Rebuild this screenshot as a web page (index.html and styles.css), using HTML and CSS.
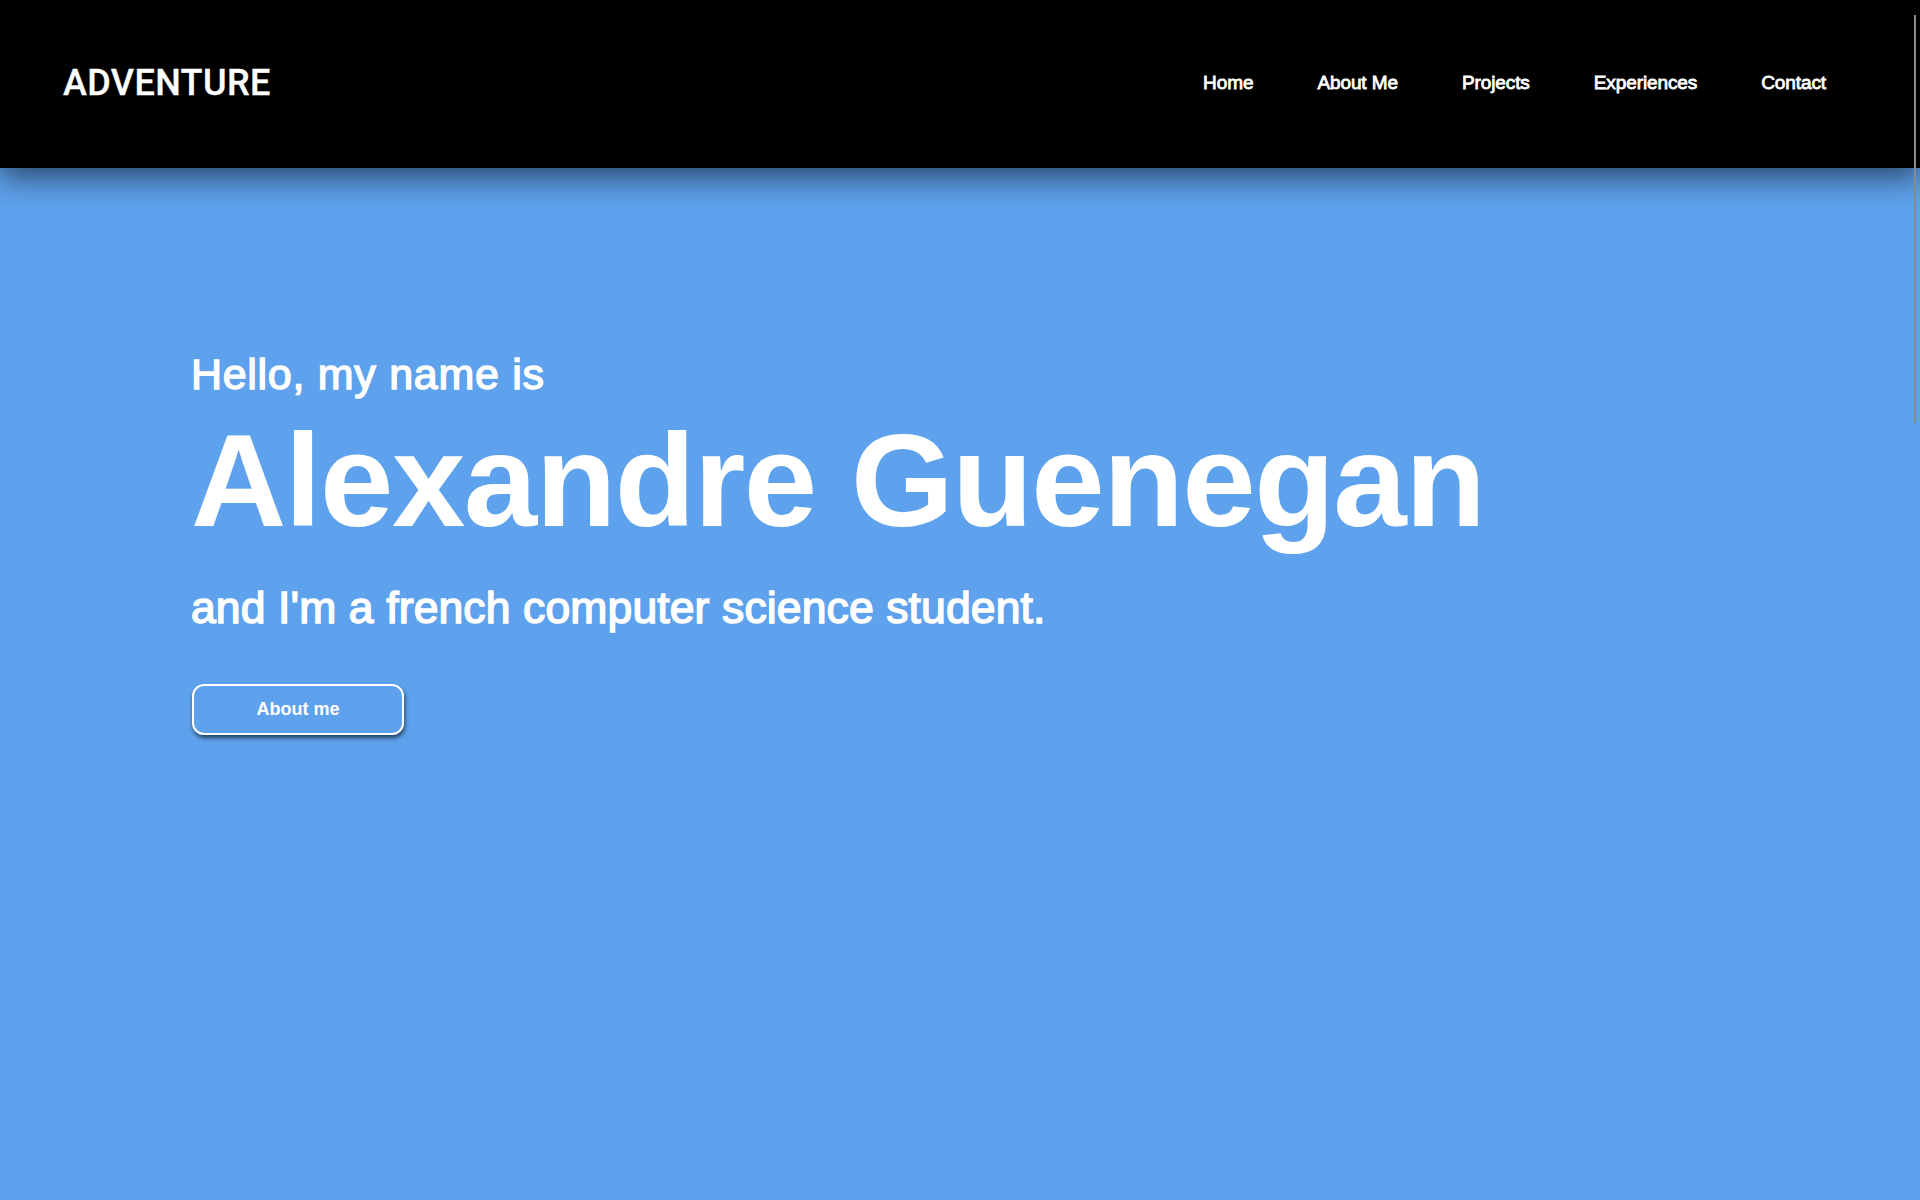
FILE: index.html
```html
<!DOCTYPE html>
<html lang="en">
<head>
<meta charset="utf-8">
<title>Adventure</title>
<link rel="stylesheet" href="styles.css">
</head>
<body>
  <header class="topbar">
    <a class="logo" href="#">ADVENTURE</a>
    <nav class="nav">
      <a href="#">Home</a>
      <a href="#">About Me</a>
      <a href="#">Projects</a>
      <a href="#">Experiences</a>
      <a href="#">Contact</a>
    </nav>
  </header>
  <main class="hero">
    <div class="hero-inner">
      <p class="hello">Hello, my name is</p>
      <h1 class="name">Alexandre Guenegan</h1>
      <p class="tagline">and I'm a french computer science student.</p>
      <a class="btn" href="#">About me</a>
    </div>
  </main>
  <div class="scroll-thumb"></div>
</body>
</html>
```

FILE: styles.css
```css
* { box-sizing: border-box; }
html, body {
  margin: 0;
  padding: 0;
  height: 100%;
  overflow: hidden;
}
body {
  background: #5ea2ed;
  font-family: "Liberation Sans", Arial, sans-serif;
  color: #fff;
  display: flex;
  flex-direction: column;
}
a { color: #fff; text-decoration: none; }

.topbar {
  position: relative;
  z-index: 2;
  height: 168px;
  flex: 0 0 168px;
  background: #000;
  display: flex;
  align-items: center;
  justify-content: space-between;
  padding: 0 94px 2px 63px;
  box-shadow: 0 10px 28px rgba(0, 0, 0, 0.55);
}
.logo {
  font-family: Roboto, "Liberation Sans", sans-serif;
  font-weight: 500;
  font-size: 36px;
  letter-spacing: 0.4px;
  -webkit-text-stroke: 0.3px #fff;
}
.nav {
  display: flex;
  gap: 64px;
}
.nav a {
  font-weight: 400;
  font-size: 19px;
  letter-spacing: -0.1px;
  -webkit-text-stroke: 0.8px #fff;
}

.hero {
  flex: 1;
  padding: 182px 0 0 191px;
}
.hero-inner {
  display: flex;
  flex-direction: column;
  align-items: flex-start;
}
.hello {
  margin: 0;
  font-weight: 400;
  font-size: 43px;
  line-height: 48px;
  letter-spacing: 0.7px;
  -webkit-text-stroke: 1.4px #fff;
}
.name {
  margin: 8px 0 0;
  font-weight: 700;
  font-size: 132px;
  line-height: 150px;
  letter-spacing: -1.5px;
}
.tagline {
  margin: 27px 0 0;
  font-weight: 400;
  font-size: 44.5px;
  line-height: 50px;
  letter-spacing: 0.12px;
  -webkit-text-stroke: 1.5px #fff;
}
.btn {
  margin: 51px 0 0 1px;
  width: 212px;
  height: 51px;
  border: 2px solid #fff;
  border-radius: 12px;
  display: flex;
  align-items: center;
  justify-content: center;
  font-weight: 700;
  font-size: 18px;
  box-shadow: 1px 3px 4px rgba(0, 0, 0, 0.6);
}

.scroll-thumb {
  position: fixed;
  top: 15px;
  right: 4px;
  width: 2px;
  height: 408px;
  background: #8a8a8a;
  z-index: 5;
}
```
